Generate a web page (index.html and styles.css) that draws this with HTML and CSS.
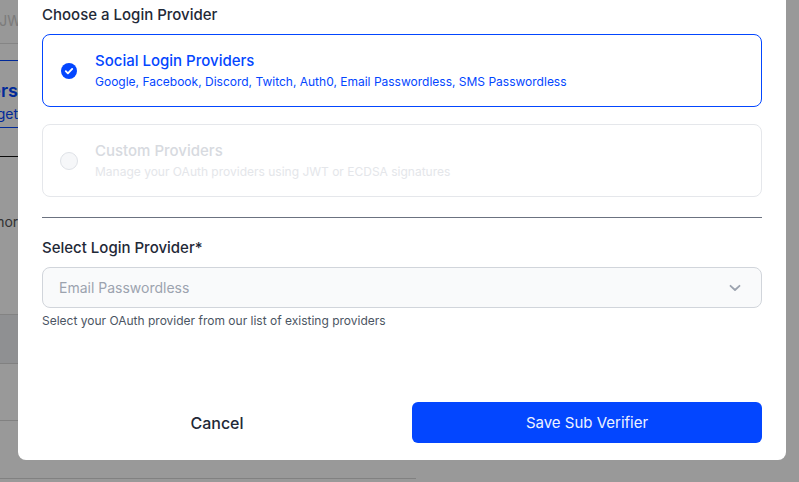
FILE: index.html
```html
<!DOCTYPE html>
<html lang="en">
<head>
<meta charset="utf-8">
<title>Choose a Login Provider</title>
<link rel="stylesheet" href="styles.css">
</head>
<body>
<div class="page">
  <div class="page-inner">
    <div class="bg-top"><div class="bg-line bg-faded w-jwt">Sign using JWT</div></div>
    <div class="bg-gap"></div>
    <div class="bg-card">
      <div class="bg-line bg-title w-edge">Providers</div>
      <div class="bg-line bg-sub w-edge">Connect widget</div>
    </div>
    <div class="bg-gap2"></div>
    <div class="bg-section">
      <div class="bg-line bg-text w-more">Learn more</div>
    </div>
    <div class="bg-row bg-row-tint"></div>
    <div class="bg-row2"></div>
    <div class="bg-row3"></div>
  </div>
</div>

<div class="overlay"></div>

<div class="modal">
  <h2 class="label">Choose a Login Provider</h2>
  <div class="options">
    <div class="option option-active">
      <span class="check">
        <svg width="16" height="16" viewBox="0 0 16 16"><circle cx="8" cy="8" r="8" fill="#0346ff"/><path d="M4.8 8.2l2.1 2.1 4.3-4.4" fill="none" stroke="#fff" stroke-width="1.9" stroke-linecap="round" stroke-linejoin="round"/></svg>
      </span>
      <div class="option-text">
        <div class="option-title">Social Login Providers</div>
        <div class="option-sub">Google, Facebook, Discord, Twitch, Auth0, Email Passwordless, SMS Passwordless</div>
      </div>
    </div>
    <div class="option option-disabled">
      <span class="radio"></span>
      <div class="option-text">
        <div class="option-title">Custom Providers</div>
        <div class="option-sub">Manage your OAuth providers using JWT or ECDSA signatures</div>
      </div>
    </div>
  </div>
  <hr class="divider">
  <div class="label">Select Login Provider*</div>
  <div class="select">
    <span class="select-value">Email Passwordless</span>
    <svg class="chev" width="12" height="8" viewBox="0 0 12 8"><path d="M1.5 1.8L6 6l4.5-4.2" fill="none" stroke="#9ca3af" stroke-width="1.8" stroke-linecap="round" stroke-linejoin="round"/></svg>
  </div>
  <div class="help">Select your OAuth provider from our list of existing providers</div>
  <div class="actions">
    <button class="btn btn-cancel" type="button">Cancel</button>
    <button class="btn btn-primary" type="button">Save Sub Verifier</button>
  </div>
</div>
</body>
</html>
```

FILE: styles.css
```css
* { box-sizing: border-box; }
html, body { margin: 0; padding: 0; }
body {
  width: 799px;
  height: 482px;
  overflow: hidden;
  background: #ffffff;
  font-family: Inter, "Noto Sans", "Liberation Sans", sans-serif;
  color: #1f2937;
}

/* underlying page (mostly hidden by the modal) */
.page { width: 416px; height: 482px; overflow: hidden; }
.page-inner { margin-left: -160px; width: 576px; }
.bg-line { text-align: right; white-space: nowrap; }
.w-edge { width: 178px; }
.w-jwt { width: 190px; }
.w-more { width: 186px; }
.bg-top { height: 44px; background: #fdfdfd; border-bottom: 1px solid #dedede; padding-top: 11px; }
.bg-faded { font-size: 14px; line-height: 20px; color: #cdcdcd; }
.bg-gap { height: 16px; }
.bg-card { height: 68px; border-top: 1px solid #0346ff; border-bottom: 1px solid #0346ff; padding-top: 18px; }
.bg-title { font-size: 18px; font-weight: 600; color: #0346ff; line-height: 24px; }
.bg-sub { font-size: 14px; color: #0346ff; line-height: 20px; padding-top: 1px; }
.bg-gap2 { height: 29px; border-bottom: 1px solid #111; }
.bg-section { height: 158px; padding-top: 55px; border-bottom: 1px solid #dadada; }
.bg-text { font-size: 14px; line-height: 20px; color: #555; }
.bg-row { height: 49px; }
.bg-row-tint { background: #eef0f3; border-bottom: 1px solid #d8d8d8; }
.bg-row2 { height: 57px; border-bottom: 1px solid #d8d8d8; }
.bg-row3 { height: 58px; border-bottom: 1px solid #d8d8d8; }

.overlay { position: fixed; inset: 0; background: rgba(0, 0, 0, 0.4); }

/* modal */
.modal {
  position: fixed;
  left: 18px;
  top: -20px;
  width: 768px;
  background: #ffffff;
  border-radius: 8px;
  padding: 25px 24px 17px;
}
.label {
  margin: 0;
  font-size: 15px;
  line-height: 20px;
  font-weight: 500;
  color: #1f2937;
}
.options { display: flex; flex-direction: column; gap: 17px; margin-top: 9px; }
.option {
  display: flex;
  align-items: center;
  gap: 18px;
  height: 73px;
  padding: 0 18px;
  border: 1px solid #e5e7eb;
  border-radius: 8px;
}
.option-active { border-color: #0346ff; }
.check { display: flex; width: 16px; height: 16px; }
.radio {
  width: 18px; height: 18px;
  margin-left: -1px; margin-right: -1px;
  border-radius: 50%;
  border: 1px solid #dfe2e7;
  background: #f6f7f9;
}
.option-text { display: flex; flex-direction: column; gap: 3px; }
.option-title { font-size: 15px; line-height: 20px; font-weight: 500; }
.option-sub { font-size: 12px; line-height: 16px; }
.option-active .option-title, .option-active .option-sub { color: #0346ff; }
.option-disabled .option-title { color: #d7dae0; }
.option-disabled .option-sub { color: #e4e6ea; }

.divider { margin: 20px 0 20px; border: 0; border-top: 1px solid #6b7280; height: 0; }

.select {
  display: flex;
  align-items: center;
  justify-content: space-between;
  margin-top: 9px;
  height: 41px;
  padding: 0 20px 0 16px;
  background: #f9fafb;
  border: 1px solid #d1d5db;
  border-radius: 8px;
}
.select-value { font-size: 14px; color: #9ca3af; }
.help { margin-top: 5px; font-size: 12px; line-height: 16px; color: #4b5563; }

.actions { display: grid; grid-template-columns: 1fr 1fr; gap: 20px; margin-top: 73px; }
.btn {
  height: 41px;
  border: 0;
  border-radius: 6px;
  font-family: inherit;
  font-size: 15px;
  font-weight: 500;
}
.btn-cancel { background: transparent; color: #1f2937; font-size: 16px; }
.btn-primary { background: #0346ff; color: #eef2ff; font-weight: 400; }
```
